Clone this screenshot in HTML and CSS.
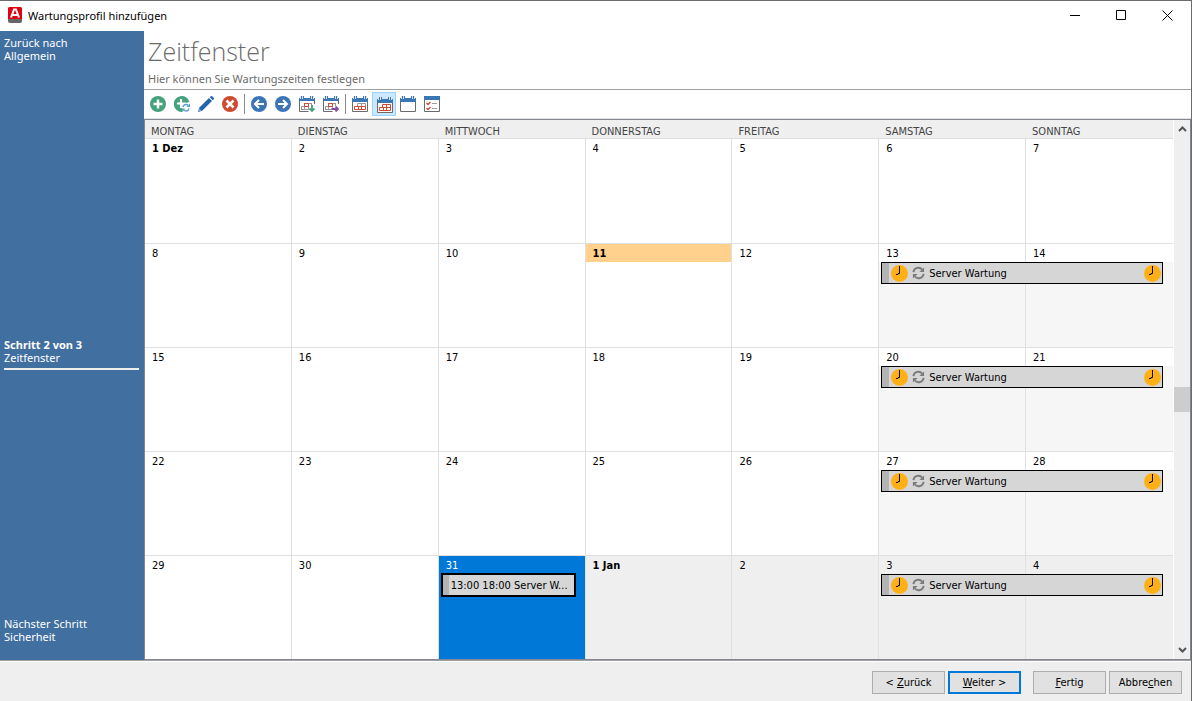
FILE: index.html
```
<!DOCTYPE html>
<html lang="de">
<head>
<meta charset="utf-8">
<meta name="viewport" content="width=device-width, initial-scale=1">
<title>Wartungsprofil hinzufügen</title>
<link rel="stylesheet" href="styles.css">
</head>

<body>

<!-- shared icon shapes -->
<svg class="defs" width="0" height="0" aria-hidden="true">
  <symbol id="cal-frame" viewBox="0 0 16 16">
    <path d="M.5 3v12.500h15V3" fill="#fff" stroke="#6b6b6b"/>
    <path d="M0 2h16v4H0z" fill="#3a75b5"/>
    <path d="M1 0h4v3H1zM11 0h4v3h-4z" fill="#dce6f1"/>
    <path d="M2 0h1v3H2zM4 0h1v3H4zM11 0h1v3h-1zM13 0h1v3h-1z" fill="#3a75b5"/>
  </symbol>
  <symbol id="cal-week" viewBox="0 0 16 16">
    <use href="#cal-frame"/>
    <path d="M5.500 10.500v-3h8v3M9.500 7.500v3" fill="none" stroke="#999"/>
    <path d="M2.500 10.500h11v3h-11zM6.500 10.500v3M9.500 10.500v3" fill="none" stroke="#cf4a2f"/>
  </symbol>
  <symbol id="cal-month" viewBox="0 0 16 16">
    <use href="#cal-frame"/>
    <path d="M5.500 10.500v-3h8v6h-11v-3h11M6.500 10.500v3M9.500 7.500v6" fill="none" stroke="#cf4a2f"/>
  </symbol>
  <symbol id="cal-day" viewBox="0 0 16 16">
    <path d="M.5 3v12.500h9M15.500 3v5" fill="none" stroke="#6b6b6b"/>
    <path d="M0 2h16v3H0z" fill="#3a75b5"/>
    <path d="M1 0h4v3H1zM11 0h4v3h-4z" fill="#dce6f1"/>
    <path d="M2 0h1v3H2zM4 0h1v3H4zM11 0h1v3h-1zM13 0h1v3h-1z" fill="#3a75b5"/>
    <path d="M5.500 7.500h7M2.500 10.500h7M2.500 13.500h7M2.500 10v4M5.500 7v7M9.500 7v7M12.500 7v3" fill="none" stroke="#999"/>
    <path d="M5.500 7.500h4v3h-4z" fill="none" stroke="#cf4a2f"/>
  </symbol>
  <symbol id="clock" viewBox="0 0 17 17">
    <circle cx="8.500" cy="8.500" r="8.500" fill="#ffb017"/>
    <path d="M8.500 1v7.500H7V9.500H5" fill="none" stroke="#000"/>
  </symbol>
  <symbol id="repeat" viewBox="0 0 14 14">
    <path d="M1.500 6A5.300 5.300 0 0 1 11 3.500M12.500 8A5.300 5.300 0 0 1 3 10.500" fill="none" stroke="#7b7b7b" stroke-width="2"/>
    <path d="M13 1v5H8zM1 13V8h5z" fill="#7b7b7b"/>
  </symbol>
</svg>

<div class="window">

<header class="titlebar">
  <svg class="logo" width="14" height="16" viewBox="0 0 14 16" aria-hidden="true">
    <rect width="14" height="16" rx="2" fill="#666"/>
    <path d="M0 12V2q0-2 2-2h10q2 0 2 2v10z" fill="#e3000f"/>
    <path d="M3 10.500L6 2.500h2l3 8M4.500 8h5" fill="none" stroke="#fff" stroke-width="2"/>
  </svg>
  <span class="caption">Wartungsprofil hinzufügen</span>
  <button class="winbtn" aria-label="Minimieren"><svg width="11" height="11"><path d="M0 5.500h10" stroke="#000"/></svg></button>
  <button class="winbtn" aria-label="Maximieren"><svg width="11" height="11"><path d="M.5.5h9v9h-9z" fill="none" stroke="#000"/></svg></button>
  <button class="winbtn" aria-label="Schließen"><svg width="11" height="11"><path d="M.5.5l10 10M10.500.5l-10 10" stroke="#000"/></svg></button>
</header>

<div class="main">

<nav class="steps">
  <div class="step">Zurück nach<br>Allgemein</div>
  <div class="step current"><b>Schritt 2 von 3</b><br>Zeitfenster</div>
  <div class="step">Nächster Schritt<br>Sicherheit</div>
</nav>

<main class="content">
  <div class="heading">
    <h1>Zeitfenster</h1>
    <p>Hier können Sie Wartungszeiten festlegen</p>
  </div>

  <div class="toolbar">
    <button aria-label="Neu"><svg viewBox="0 0 16 16"><circle cx="8" cy="8" r="8" fill="#45a27c"/><path d="M8 3.500v9M3.500 8h9" stroke="#fff" stroke-width="2.400"/></svg></button>
    <button aria-label="Neue Serie"><svg viewBox="0 0 16 16"><path d="M15.500 6A8 8 0 1 0 8 16V8z" fill="#45a27c"/><path d="M7 3v9M3 7.500h9" stroke="#fff" stroke-width="2.200"/><path d="M8 7h8v9H8z" fill="#fff"/><path d="M9 11q.5-2.500 3-2.500 1.500 0 2.500 1.200M15 12.500q-.5 2.500-3 2.500-1.500 0-2.500-1.200" fill="none" stroke="#58a0c8" stroke-width="1.300"/><path d="M16 7.500V11h-3.500zM8 16v-3.500h3.500z" fill="#58a0c8"/></svg></button>
    <button aria-label="Bearbeiten"><svg viewBox="0 0 16 16"><path d="M0 16l1.200-4.300L11 2l3 3-9.800 9.700zM11.800 1.200L13 0q1 0 2 1t1 2l-1.200 1.200z" fill="#2263ae"/><path d="M1.300 12.500l2.200 2.200L1 15.200z" fill="#8db3dc"/></svg></button>
    <button aria-label="Löschen"><svg viewBox="0 0 16 16"><circle cx="8" cy="8" r="8" fill="#cf4a2f"/><path d="M4.500 4.500l7 7M11.500 4.500l-7 7" stroke="#fff" stroke-width="2.600"/></svg></button>
    <span class="sep"></span>
    <button aria-label="Vorheriger"><svg viewBox="0 0 16 16"><circle cx="8" cy="8" r="8" fill="#3a75b5"/><path d="M13 8H4M8 4L4 8l4 4" fill="none" stroke="#fff" stroke-width="2"/></svg></button>
    <button aria-label="Nächster"><svg viewBox="0 0 16 16"><circle cx="8" cy="8" r="8" fill="#3a75b5"/><path d="M3 8h9M8 4l4 4-4 4" fill="none" stroke="#fff" stroke-width="2"/></svg></button>
    <button aria-label="Heute"><svg viewBox="0 0 16 16"><use href="#cal-day"/><path d="M13 9v6M10.500 12.500L13 15l2.500-2.500" fill="none" stroke="#45a27c" stroke-width="1.800"/></svg></button>
    <button aria-label="Gehe zu Datum"><svg viewBox="0 0 16 16"><use href="#cal-day"/><path d="M8.500 13H15M12.500 10.500L15 13l-2.500 2.500" fill="none" stroke="#8c4aa8" stroke-width="1.800"/></svg></button>
    <span class="sep"></span>
    <button aria-label="Woche"><svg viewBox="0 0 16 16"><use href="#cal-week"/></svg></button>
    <button class="active" aria-label="Monat"><svg viewBox="0 0 16 16"><use href="#cal-month"/></svg></button>
    <button aria-label="Tag"><svg viewBox="0 0 16 16"><use href="#cal-frame"/></svg></button>
    <button aria-label="Liste"><svg viewBox="0 0 16 16"><path d="M.5.5h15v15H.5z" fill="#fff" stroke="#6b6b6b"/><path d="M0 0h16v4H0z" fill="#3a75b5"/><path d="M2.500 7l1.500 1.500L6.500 6M2.500 12L4 13.500 6.500 11" fill="none" stroke="#cf4a2f" stroke-width="1.300"/><path d="M8 7.500h5M8 12.500h5" stroke="#a99"/></svg></button>
  </div>

  <div class="calendar">
    <table>
      <thead>
        <tr><th>MONTAG</th><th>DIENSTAG</th><th>MITTWOCH</th><th>DONNERSTAG</th><th>FREITAG</th><th>SAMSTAG</th><th>SONNTAG</th></tr>
      </thead>
      <tbody>
        <tr>
          <td><div class="day"><b>1 Dez</b></div></td>
          <td><div class="day">2</div></td>
          <td><div class="day">3</div></td>
          <td><div class="day">4</div></td>
          <td><div class="day">5</div></td>
          <td><div class="day">6</div></td>
          <td><div class="day">7</div></td>
        </tr>
        <tr>
          <td><div class="day">8</div></td>
          <td><div class="day">9</div></td>
          <td><div class="day">10</div></td>
          <td><div class="day today"><b>11</b></div></td>
          <td><div class="day">12</div></td>
          <td class="off"><div class="day">13</div>
            <div class="event"><svg class="clock"><use href="#clock"/></svg><svg class="repeat"><use href="#repeat"/></svg><span>Server Wartung</span><svg class="clock"><use href="#clock"/></svg></div></td>
          <td class="off"><div class="day">14</div></td>
        </tr>
        <tr>
          <td><div class="day">15</div></td>
          <td><div class="day">16</div></td>
          <td><div class="day">17</div></td>
          <td><div class="day">18</div></td>
          <td><div class="day">19</div></td>
          <td class="off"><div class="day">20</div>
            <div class="event"><svg class="clock"><use href="#clock"/></svg><svg class="repeat"><use href="#repeat"/></svg><span>Server Wartung</span><svg class="clock"><use href="#clock"/></svg></div></td>
          <td class="off"><div class="day">21</div></td>
        </tr>
        <tr>
          <td><div class="day">22</div></td>
          <td><div class="day">23</div></td>
          <td><div class="day">24</div></td>
          <td><div class="day">25</div></td>
          <td><div class="day">26</div></td>
          <td class="off"><div class="day">27</div>
            <div class="event"><svg class="clock"><use href="#clock"/></svg><svg class="repeat"><use href="#repeat"/></svg><span>Server Wartung</span><svg class="clock"><use href="#clock"/></svg></div></td>
          <td class="off"><div class="day">28</div></td>
        </tr>
        <tr>
          <td><div class="day">29</div></td>
          <td><div class="day">30</div></td>
          <td class="selected"><div class="day">31</div>
            <div class="event single"><span>13:00 18:00 Server W...</span></div></td>
          <td class="next"><div class="day"><b>1 Jan</b></div></td>
          <td class="next"><div class="day">2</div></td>
          <td class="next"><div class="day">3</div>
            <div class="event"><svg class="clock"><use href="#clock"/></svg><svg class="repeat"><use href="#repeat"/></svg><span>Server Wartung</span><svg class="clock"><use href="#clock"/></svg></div></td>
          <td class="next"><div class="day">4</div></td>
        </tr>
      </tbody>
    </table>
    <div class="scrollbar">
      <svg width="9" height="6"><path d="M1 5l3.500-3.500L8 5" fill="none" stroke="#555" stroke-width="2"/></svg>
      <div class="track"><div class="thumb"></div></div>
      <svg width="9" height="6"><path d="M1 1l3.500 3.500L8 1" fill="none" stroke="#555" stroke-width="2"/></svg>
    </div>
  </div>
</main>

</div>

<footer class="buttons">
  <button>&lt; <u>Z</u>urück</button>
  <button class="default"><u>W</u>eiter &gt;</button>
  <button class="finish"><u>F</u>ertig</button>
  <button>Abbre<u>c</u>hen</button>
</footer>

</div>

</body>
</html>
```
FILE: styles.css
```
* {
  box-sizing: border-box;
}

body {
  margin: 0;
  font-family: "DejaVu Sans Condensed", "Noto Sans", sans-serif;
  font-size: 11px;
  line-height: 13px;
  color: #000;
}

button {
  font: inherit;
  color: inherit;
  padding: 0;
}

.defs {
  position: absolute;
}

.window {
  display: flex;
  flex-direction: column;
  min-height: 100vh;
  background: #fff;
  border-top: 1px solid #6b6b6b;
  border-right: 1px solid #6b6b6b;
}

/* title bar */

.titlebar {
  display: flex;
  align-items: center;
  height: 30px;
  padding: 0 1px 2px 8px;
}

.caption {
  flex: 1;
  margin-left: 6px;
  font-family: "Noto Sans", sans-serif;
}

.winbtn {
  display: flex;
  align-items: center;
  justify-content: center;
  width: 46px;
  height: 28px;
  border: 0;
  background: none;
}

/* body of the wizard */

.main {
  flex: 1;
  display: flex;
  border-bottom: 1px solid #a0a0a0;
}

.steps {
  display: flex;
  flex-direction: column;
  justify-content: space-between;
  width: 144px;
  padding: 5px 5px 17px 4px;
  background: #416f9f;
  color: #fff;
  font-family: "Noto Sans", sans-serif;
}

.current {
  padding-top: 28px;
  padding-bottom: 4px;
  border-bottom: 2px solid #eee;
}

.content {
  flex: 1;
  display: flex;
  flex-direction: column;
  min-width: 0;
}

.heading {
  height: 59px;
  padding-left: 4px;
  border-bottom: 1px solid #a0a0a0;
  color: #6b6b6b;
  font-family: "Noto Sans", sans-serif;
}

h1 {
  margin: 0;
  font-family: "Open Sans", sans-serif;
  font-size: 25px;
  font-weight: 300;
  line-height: 41px;
}

.heading p {
  margin: 0;
}

/* toolbar */

.toolbar {
  display: flex;
  align-items: center;
  height: 29px;
  padding: 2px;
  border-bottom: 1px solid #e3e3e3;
}

.toolbar button {
  display: flex;
  align-items: center;
  justify-content: center;
  width: 24px;
  height: 24px;
  border: 1px solid transparent;
  background: none;
}

.toolbar svg {
  width: 16px;
  height: 16px;
}

.toolbar .active {
  padding: 1px 0 0 1px;
  background: #cce8ff;
  border-color: #99d1ff;
}

.sep {
  width: 1px;
  height: 20px;
  margin: 0 2px;
  background: #8c8c8c;
}

/* month view */

.calendar {
  flex: 1;
  display: flex;
  border: 1px solid #828790;
}

table {
  flex: 1;
  width: 100%;
  table-layout: fixed;
  border-collapse: separate;
  border-spacing: 0;
}

th {
  height: 19px;
  padding: 4px 0 0 6px;
  border-bottom: 1px solid #dedede;
  background: #efefef;
  color: #444;
  font-weight: normal;
  text-align: left;
}

td {
  position: relative;
  height: 104px;
  padding: 0;
  border-right: 1px solid #e0e0e0;
  border-bottom: 1px solid #e0e0e0;
  vertical-align: top;
}

td:last-child {
  border-right: 0;
}

tr:first-child td {
  height: 105px;
}

tr:last-child td {
  height: 103px;
  border-bottom: 0;
}

.day {
  height: 18px;
  padding: 3px 7px;
  background: #fff;
}

.today {
  background: #ffd18c;
}

.off {
  background: #f6f6f6;
}

.next,
.next .day {
  background: #efefef;
}

.selected,
.selected .day {
  background: #0078d7;
  color: #fff;
}

/* an event lies over the day cells it spans */
.event {
  position: absolute;
  z-index: 1;
  top: 18px;
  left: 2px;
  display: flex;
  align-items: center;
  width: calc(200% - 10px);
  height: 22px;
  padding-right: 1px;
  border: 1px solid #000;
  background: #d6d6d6;
  color: #000;
}

.event::before {
  content: "";
  width: 7px;
  height: 100%;
  margin-right: 2px;
  background: #b4b4b4;
}

.event span {
  flex: 1;
  overflow: hidden;
  text-overflow: ellipsis;
  white-space: nowrap;
}

.clock {
  width: 17px;
  height: 17px;
}

.repeat {
  width: 13px;
  height: 14px;
  margin: 0 4px;
}

.single {
  top: 17px;
  width: calc(100% - 11px);
  height: 24px;
  border-width: 2px;
}

.single::before {
  width: 6px;
}

.scrollbar {
  display: flex;
  flex-direction: column;
  align-items: center;
  flex: none;
  width: 17px;
  padding: 6px 0;
  border-left: 1px solid #fff;
  background: #efefef;
}

.track {
  flex: 1;
  display: flex;
  flex-direction: column;
  width: 100%;
  padding-top: 255px;
}

.thumb {
  height: 25px;
  background: #cdcdcd;
}

/* wizard buttons */

.buttons {
  display: flex;
  justify-content: flex-end;
  gap: 3px;
  height: 40px;
  padding: 9px 9px 0;
  border-top: 1px solid #fff;
  background: #efefef;
}

.buttons button {
  width: 73px;
  height: 23px;
  border: 1px solid #adadad;
  background: #e1e1e1;
}

.buttons .default {
  border: 2px solid #0078d7;
}

.buttons .finish {
  margin-left: 9px;
}
```
